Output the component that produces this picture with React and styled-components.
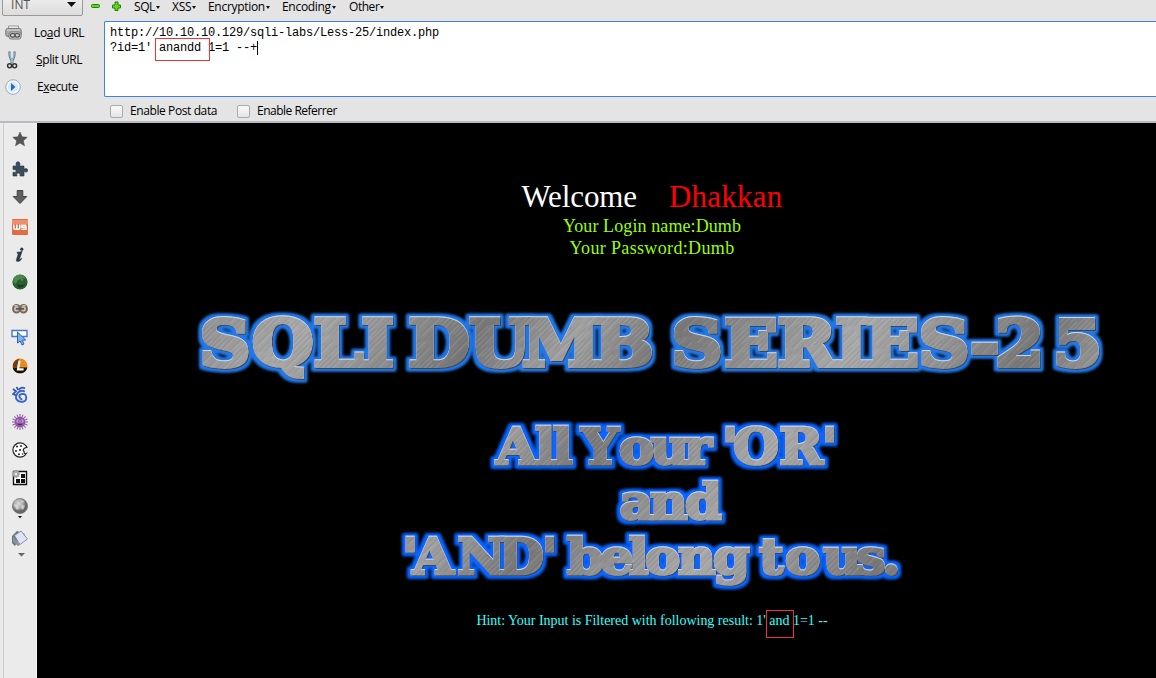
import React from 'react';
import styled, { createGlobalStyle } from 'styled-components';

const Global = createGlobalStyle`
  * { box-sizing: border-box; }
  html, body { margin: 0; background: #e4e4e4; overflow: hidden; }
`;

const Window = styled.div`
  display: flex; flex-direction: column;
  width: 1156px; height: 678px; overflow: hidden;
  font-family: "Open Sans", "Noto Sans", sans-serif; font-size: 12px; color: #000;
`;
const Toolbar = styled.header`
  display: flex; height: 123px; background: #e4e4e4; border-bottom: 2px solid #b9b9c2; flex: none;
`;
const Side = styled.div`width: 104px; flex: none; display: flex; flex-direction: column;`;
const Main = styled.div`flex: 1; display: flex; flex-direction: column; min-width: 0;`;
const Select = styled.div`
  display: flex; align-items: center; justify-content: space-between;
  width: 81px; height: 25px; margin: -9px 0 0 2px; padding: 3px 6px 1px 8px; line-height: 12px;
  border: 1px solid #999; border-radius: 2px; background: linear-gradient(#f4f4f4, #dcdcdc);
  color: #555; letter-spacing: 0.1px; flex: none;
`;
const Actions = styled.div`display: flex; flex-direction: column; padding-top: 3px;`;
const Action = styled.div`
  display: flex; align-items: center; height: 27px; padding-left: 5px;
  svg { flex: none; }
`;
const Label = styled.span`
  line-height: ${p => p.$lh || 16}px; white-space: pre; letter-spacing: ${p => p.$ls || '-0.4px'};
  margin-left: ${p => p.$ml || 0}px;
`;
const Menu = styled.nav`display: flex; height: 21px; flex: none; position: relative;`;
const Signs = styled.div`display: flex; gap: 12px; width: 30px; padding-top: 1px; margin-left: -13px; flex: none;`;
const MenuItem = styled.div`
  display: flex; align-items: center; gap: 1px; width: ${p => p.$w}px; height: 13px; flex: none;
  svg { margin-top: 2px; flex: none; }
`;
const Box = styled.div`
  position: relative; height: 76px; border: 1px solid #3f80ea; border-right: 0; border-radius: 2px 0 0 2px;
  background: #fff; padding: 4px 0 0 5px; flex: none;
  font: 12px/15px "Liberation Mono", monospace; letter-spacing: -0.2px; white-space: pre;
`;
const Caret = styled.span`display: inline-block; width: 1px; height: 14px; background: #000; vertical-align: top;`;
const Mark = styled.span`
  position: absolute; border: 1px solid #e33; left: ${p => p.$x}px; top: ${p => p.$y}px;
  width: ${p => p.$w}px; height: ${p => p.$h}px;
`;
const Checks = styled.div`display: flex; align-items: center; height: 24px; padding: 3px 0 0 6px; flex: none;`;
const Check = styled.div`display: flex; align-items: center; gap: 7px; width: 127px; padding-top: 1px;`;
const Tick = styled.span`
  width: 13px; height: 13px; border: 1px solid #aaa; border-radius: 2px;
  background: linear-gradient(#fafafa, #e4e4e4);
`;
const Body = styled.div`display: flex; flex: 1; min-height: 0;`;
const Rail = styled.aside`
  width: 37px; flex: none; background: #ebebeb; border-right: 1px solid #f6f6f6; padding-left: 3px;
`;
const RailInner = styled.div`
  display: flex; flex-direction: column; align-items: center; height: 100%; border-left: 1px solid #ccc; padding-right: 1px;
`;
const Slot = styled.div`
  height: ${p => p.$h || 28}px; display: flex; align-items: center; flex: none;
  svg { display: block; }
`;
const Page = styled.main`
  flex: 1; background: #000; display: flex; flex-direction: column; min-width: 0;
  font-family: "Liberation Serif", serif; color: #99ff00; white-space: pre;
`;
const Centered = styled.div`
  display: flex; flex-direction: column; align-items: center; padding-left: 111px; flex: none;
`;
const Heading = styled.div`
  display: flex; gap: 32px; margin-top: 56px; font-size: 31px; line-height: 36px;
`;
const Hello = styled.span`color: ${p => p.$c}; letter-spacing: ${p => p.$ls}px;`;
const Line = styled.div`font-size: 18px; line-height: 22px; letter-spacing: ${p => p.$ls}px;`;
const Art = styled.svg`display: block; width: 1119px; height: 300px; margin-top: 41px; flex: none;`;
const Hint = styled.div`
  position: relative; color: #33ffff; font-size: 14px; line-height: 16px; margin-top: 13px; letter-spacing: -0.01px;
`;

const Arrow = ({ w = 5, h = 3, c = '#111' }) => (
  <svg width={w} height={h} viewBox={`0 0 ${w} ${h}`}><path d={`M0 0H${w}L${w / 2} ${h}Z`} fill={c} /></svg>
);

const menus = [['SQL', 38, '-0.4px'], ['XSS', 36, '-0.3px'], ['Encryption', 74, '-0.3px'], ['Encoding', 67, '-0.3px'], ['Other', 50, '-0.45px']];

const Printer = () => (
  <svg width="17" height="17" viewBox="0 0 17 17">
    <path d="M3.5 6V2h10v4" fill="#eee" stroke="#999" />
    <rect x=".8" y="4.5" width="15.4" height="8" rx="2" fill="#aaa" stroke="#777" />
    <path d="M2 6h13" stroke="#ddd" />
    <rect x="4" y="8" width="12" height="7" rx="2" fill="#ddd" stroke="#777" />
    <g fill="none" stroke="#555" strokeWidth="1.4"><rect x="5.5" y="9.6" width="4.5" height="3.4" rx="1.5" /><rect x="10" y="9.6" width="4.5" height="3.4" rx="1.5" /></g>
  </svg>
);
const Scissors = () => (
  <svg width="14" height="20" viewBox="0 0 14 20" fill="none">
    <path d="M4.6 1.5Q3.6 7 8 13M9.4 1.5Q10.4 7 6 13" stroke="#587b8d" strokeWidth="2.2" />
    <path d="M4.7 2.5Q4.4 7 7.8 12.5M9.3 2.5Q9.6 7 6.2 12.5" stroke="#b7d2dd" strokeWidth=".9" />
    <circle cx="4.6" cy="15.8" r="2" stroke="#333" strokeWidth="1.5" /><circle cx="9.6" cy="15.8" r="2" stroke="#333" strokeWidth="1.5" />
  </svg>
);
const Play = () => (
  <svg width="16" height="16" viewBox="0 0 16 16">
    <circle cx="8" cy="8" r="7.3" fill="#edf5fd" stroke="#93adcb" /><circle cx="8" cy="8" r="5.6" fill="#d8e9fa" stroke="#fff" />
    <path d="M6 4l4.4 4L6 12z" fill="#2468ba" />
  </svg>
);

const icons = [
  [32, <svg width="16" height="16"><path d="M8 1l2.1 4.8 5.1.5-3.9 3.4 1.2 5.1L8 12.1l-4.5 2.7 1.2-5.1L.8 6.3l5.1-.5z" fill="#555" stroke="#444" strokeWidth=".5" /></svg>],
  [27, <svg width="16" height="16"><path d="M1 5h3.5Q3 1 6 .8 8.8 1 7.5 5H12v3q3.6-1.3 3.8 1.2-.2 2.8-3.8 1.4V15H8q.8-3-1.7-3T5 15H1v-3.7q3.3.5 3.2-1.4T1 8.5z" fill="#3d4c5a" stroke="#26323d" strokeWidth=".6" /></svg>],
  [30, <svg width="16" height="16"><path d="M5.2 1.5h5.6v6h4L8 14.5l-6.8-7h4z" fill="#606060" stroke="#444" /></svg>],
  [29, <svg width="16" height="16"><rect width="16" height="16" rx="1" fill="#e16b43" /><path d="M0 1h16v4H0z" fill="#f1a080" opacity=".7" /><path d="M1.8 5.5v3.6q0 1.2 1.2 1.2h3.6q1.2 0 1.2-1.2V5.5M4.8 5.5v4.5M14.4 6.2H10v1.9h4v2.2H9.4" fill="none" stroke="#fff" strokeWidth="1.6" /></svg>],
  [27, <svg width="16" height="16"><path d="M5 5.2q3 0 5.2-.9L7.6 11.8q-.2 1.2 2.4-.8-1.5 3.6-4.2 3.6-2 0-1.4-2.2L6.2 7Q6.5 6 5 6.2z" fill="#2b3a44" stroke="#2b3a44" strokeWidth=".5" /><circle cx="9.8" cy="2.2" r="1.6" fill="#2b3a44" /></svg>],
  [27, <svg width="16" height="16"><circle cx="8" cy="8" r="7.6" fill="#285f31" /><path d="M1 5q3-5 8-4 3 .5 5 4-5-2-7 1-2 0-3 4Q1 9 1 5z" fill="#63a361" opacity=".6" /><path d="M5 9q2 4 8 1-3 5-7 3z" fill="#123f21" /><path d="M9 4l3 2-3 1z" fill="#4f9153" /></svg>],
  [28, <svg width="16" height="12"><g fill="#c9c1b5" stroke="#75695c" strokeWidth="2"><rect x="1.2" y="2" width="6.6" height="7.6" rx="3.2" /><rect x="8.2" y="2" width="6.6" height="7.6" rx="3.2" /></g><path d="M4 5.8h8" stroke="#5d5247" strokeWidth="1.8" /><path d="M2 3q2-1.4 4 0M10 3q2-1.4 4 0" stroke="#c5bdb0" fill="none" /></svg>],
  [28, <svg width="17" height="17"><path d="M1 1.5h15v6H1z" fill="#fff" stroke="#4679c8" strokeWidth="1.4" /><path d="M6.5 3v11l2.7-2 1.8 4 2-1-1.8-3.7 3.5-.3z" fill="#81b4ef" stroke="#2d66b6" /></svg>],
  [29, <svg width="16" height="16"><circle cx="8" cy="8" r="7.5" fill="#eb8a20" /><path d="M.7 9.5a7.5 7.5 0 0014.6 0z" fill="#15110d" /><path d="M1 6q2-4.5 6-5.3L5 9.5H1z" fill="#7a3a12" /><path d="M7.6 2.8L6 11.4h5.6" stroke="#fff" strokeWidth="2.1" fill="none" /></svg>],
  [28, <svg width="16" height="17"><path d="M1 3l3 2.4L1 8l3 1.4M4.5 1l1.8 3M13 2.4Q8.5.4 7 4" fill="none" stroke="#3558b6" strokeWidth="1.8" /><path d="M12.8 5.6Q9 3.4 6 6.6T4.4 13q2 3.2 6 2.7t3.8-4.4-4-3.3-2.6 3.2 2.6 1.6" fill="none" stroke="#3966cd" strokeWidth="1.9" /></svg>],
  [28, <svg width="18" height="18" viewBox="-9 -9 18 18">{Array.from({ length: 16 }, (_, i) => <path key={i} d="M0-4V-8" stroke="#9460ad" strokeWidth="1.1" transform={`rotate(${i * 22.5})`} />)}<circle r="5.3" fill="#9254ac" /><circle cx="-2" cy="-1" r="1.5" fill="#dfc7e8" /><circle cx="2" cy="-1" r="1.5" fill="#dfc7e8" /><circle cx="-1.7" cy="-1" r=".7" fill="#352043" /><circle cx="1.7" cy="-1" r=".7" fill="#352043" /><path d="M-2 2Q0 3.5 2 2" stroke="#462555" fill="none" /></svg>],
  [28, <svg width="16" height="16"><path d="M13.8 3.6Q11.6.9 8 .9a7.1 7.1 0 100 14.2q4 0 6.2-3.6-1.2.6-2-.6.2-1.6-1-2.4.2-2 1.6-2.5L15 5.2z" fill="#fff" stroke="#222" strokeWidth="1.2" /><g fill="#222"><circle cx="5" cy="4.5" r="1" /><circle cx="9" cy="4" r="1" /><circle cx="4" cy="9" r="1" /><circle cx="8" cy="8" r="1" /><circle cx="7" cy="12.3" r="1" /><circle cx="10.5" cy="12" r=".8" /></g></svg>],
  [28, <svg width="16" height="16"><path d="M1.5 1.5h13v13h-13z" fill="#fff" stroke="#111" strokeWidth="1.4" /><path d="M9 4h4v4H9zM4 9h4v4H4zM9 9h4v4H9z" fill="#111" /><circle cx="4" cy="4" r="3.4" fill="#aaa" stroke="#888" strokeDasharray="1 1" /><circle cx="4" cy="4" r="1.2" fill="#eee" /></svg>],
  [32, <svg width="16" height="22"><defs><radialGradient id="ball" cx=".4" cy=".35"><stop stopColor="#ddd" /><stop offset=".6" stopColor="#aaa" /><stop offset="1" stopColor="#666" /></radialGradient></defs><circle cx="8" cy="9" r="7.6" fill="url(#ball)" stroke="#666" strokeWidth=".6" /><path d="M2 7l3 1 2 3-2 2-2-3zM8 3l4 1-1 2zM10 8l3 1-2 4-2-2z" fill="#e6e6e6" opacity=".65" /><path d="M6 19h4l-2 2.3z" fill="#111" /></svg>],
  [37, <svg width="18" height="28"><path d="M1 7L6 2l8 3-7 7-3 5-3-3z" fill="#687079" /><path d="M3.5 6.5L10 2l6.5 8L9 15.5z" fill="#dfe3f6" stroke="#8b93aa" /><path d="M2 7v6l5 4 2-1z" fill="#8a929b" /><path d="M7 24h7l-3.5 3.5z" fill="#666" /></svg>],
];

const logoWords = [
  ['SQLI', 1, 66.2, [199.5, 252, 313.5, 361]],
  ['DUMB', 1, 66.2, [408.5, 469, 522, 594]],
  ['SERIES-25', 1, 66.2, [671.5, 724, 777.5, 835, 865, 918.5, 970, 995, 1053]],
  ['All', 0, 164.2, [496, 535, 552.5]],
  ['Your', 0, 164.2, [581, 619, 650.5, 684]],
  ["'OR'", 0, 164.2, [722, 733, 779, 821.5]],
  ['and', 0, 219.2, [619.5, 649.5, 685]],
  ["'AND'", 0, 274.5, [402, 412.5, 457, 498, 541.5]],
  ['belong', 0, 274.5, [567, 600, 628.5, 645, 677.5, 713]],
  ['to', 0, 274.5, [759, 785]],
  ['us.', 0, 274.5, [823, 856, 882]],
];
const faces = [
  { id: 'steel', size: 48, stretch: 1.1, edge: 2.4, color: '#0865ff' },
  { id: 'title', size: 63, stretch: 1.12, edge: 3.8, color: '#2478e8' },
];

const Logo = () => (
  <Art viewBox="37 300 1119 300">
    <defs>
      <linearGradient id="metal" gradientUnits="userSpaceOnUse" x1="200" y1="0" x2="390" y2="110" spreadMethod="reflect">
        <stop stopColor="#a0a0a0" /><stop offset=".35" stopColor="#777" /><stop offset=".65" stopColor="#909090" /><stop offset="1" stopColor="#a8a8a8" />
      </linearGradient>
      <pattern id="brushed" patternUnits="userSpaceOnUse" width="1200" height="700">
        <rect width="1200" height="700" fill="url(#metal)" />
        <rect width="1200" height="700" fill="url(#scratches)" />
      </pattern>
      <pattern id="scratches" patternUnits="userSpaceOnUse" width="17" height="53" patternTransform="rotate(42)">
        <path d="M1 0V30M4.5 12V46M8 0V24M12 20V50M14.5 4V30" stroke="#fff" strokeWidth=".7" opacity=".17" />
        <path d="M2.7 8V50M6.3 0V35M10 20V50M13.2 0V28M16 14V53" stroke="#333" strokeWidth=".7" opacity=".17" />
      </pattern>
      {faces.map(f => (
        <filter key={f.id} id={f.id} filterUnits="userSpaceOnUse" x="180" y="295" width="950" height="310">
          <feMorphology in="SourceAlpha" operator="dilate" radius="3" result="fat" />
          <feGaussianBlur in="fat" stdDeviation="1.6" result="soft" />
          <feFlood floodColor={f.color} /><feComposite in2="soft" operator="in" result="halo" />
          <feOffset in="SourceAlpha" dx="-.5" dy="-.6" result="up" />
          <feFlood floodColor="#c8d8e2" /><feComposite in2="up" operator="in" result="light" />
          <feOffset in="SourceAlpha" dx=".6" dy=".6" result="down" />
          <feFlood floodColor="#35485c" /><feComposite in2="down" operator="in" result="dark" />
          <feMerge><feMergeNode in="halo" /><feMergeNode in="halo" /><feMergeNode in="dark" /><feMergeNode in="light" /><feMergeNode in="SourceGraphic" /></feMerge>
        </filter>
      ))}
    </defs>
    {faces.map((f, n) => (
      <g key={f.id} filter={`url(#${f.id})`} fontFamily="DejaVu Serif" fontWeight="700" fontSize={f.size} fill="url(#brushed)" stroke="url(#brushed)" strokeWidth={f.edge}>
        {logoWords.filter(w => w[1] === n).map(([t, , y, x]) => (
          <text key={t} transform={`scale(${f.stretch} 1)`} x={x.map(v => (v / f.stretch).toFixed(2)).join(' ')} y={300 + y}>{t}</text>
        ))}
      </g>
    ))}
  </Art>
);

export default function App() {
  return (
    <Window>
      <Global />
      <Toolbar>
        <Side>
          <Select>INT<Arrow w={9} h={5} /></Select>
          <Actions>
            <Action><Printer /><Label $ml={12} $ls="-0.35px">Lo<u>a</u>d URL</Label></Action>
            <Action><Scissors /><Label $ml={17}><u>S</u>plit URL</Label></Action>
            <Action><Play /><Label $ml={16}>E<u>x</u>ecute</Label></Action>
          </Actions>
        </Side>
        <Main>
          <Menu>
            <Signs>
              <svg width="9" height="11"><rect x=".5" y="3.5" width="8" height="3" rx="1" fill="#65d51a" stroke="#24810c" /></svg>
              <svg width="9" height="11"><path d="M3 1h3v3h2.5v3H6v2.5H3V7H.5V4H3z" fill="#65d51a" stroke="#24810c" /></svg>
            </Signs>
            <MenuItem $w={13} />
            {menus.map(([t, w, ls]) => <MenuItem key={t} $w={w}><Label $ls={ls} $lh={13}>{t}</Label><Arrow w={4} /></MenuItem>)}
          </Menu>
          <Box>
            <div>http://10.10.10.129/sqli-labs/Less-25/index.php</div>
            <div>?id=1' anandd 1=1 --+<Caret /></div>
            <Mark $x={50} $y={16} $w={55} $h={23} />
          </Box>
          <Checks>
            <Check><Tick /><Label>Enable Post data</Label></Check>
            <Check><Tick /><Label $ls="-0.5px">Enable Referrer</Label></Check>
          </Checks>
        </Main>
      </Toolbar>
      <Body>
        <Rail><RailInner>{icons.map(([h, icon], i) => <Slot key={i} $h={h}>{icon}</Slot>)}</RailInner></Rail>
        <Page>
          <Centered>
            <Heading><Hello $c="#fff" $ls={-0.1}>Welcome</Hello><Hello $c="#f00" $ls={0.25}>Dhakkan</Hello></Heading>
            <Line $ls={0.1}>Your Login name:Dumb</Line>
            <Line $ls={0.35}>Your Password:Dumb</Line>
          </Centered>
          <Logo />
          <Centered>
            <Hint>Hint: Your Input is Filtered with following result: 1' and 1=1 --<Mark $x={290} $y={-3} $w={28} $h={28} /></Hint>
          </Centered>
        </Page>
      </Body>
    </Window>
  );
}
